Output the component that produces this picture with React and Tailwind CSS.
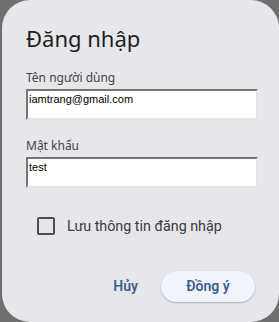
import { useState } from 'react'

const inputCls =
  "block w-[232px] h-[31px] bg-white border-2 border-t-[#767676] border-l-[#767676] border-b-[#e4e4e4] border-r-[#e4e4e4] px-[1px] pt-0 pb-[12px] leading-[15px] text-[11px] text-black outline-none font-['Liberation_Sans',Arial,sans-serif]"

export default function App() {
  const [user, setUser] = useState('iamtrang@gmail.com')
  const [pass, setPass] = useState('test')
  const [remember, setRemember] = useState(false)

  return (
    <div className="h-[322px] w-[279px] bg-[#6f6f6f] pl-[2px] overflow-hidden">
      <div className="h-full rounded-[28px] bg-[#e7e7eb] px-[24px] pt-[24px] flex flex-col">
        {/* Title */}
        <h1 className="text-[22px] leading-[28px] text-[#1e1e1e] font-['Noto_Sans',sans-serif]">
          Đăng nhập
        </h1>

        {/* Username */}
        <label className="mt-[18px] mb-[3px] text-[12px] leading-[16px] text-[#454545] font-['Noto_Sans',sans-serif]">
          Tên người dùng
        </label>
        <input className={inputCls} value={user} onChange={e => setUser(e.target.value)} />

        {/* Password */}
        <label className="mt-[18px] mb-[3px] text-[12px] leading-[16px] text-[#454545] font-['Noto_Sans',sans-serif]">
          Mật khẩu
        </label>
        <input className={inputCls} value={pass} onChange={e => setPass(e.target.value)} />

        {/* Remember */}
        <button
          type="button"
          onClick={() => setRemember(!remember)}
          className="mt-[29px] ml-[11px] flex items-center gap-[12px] text-left"
        >
          <span className="w-[18px] h-[18px] rounded-[2px] border-2 border-[#4a4e54] flex items-center justify-center">
            {remember && <span className="w-[10px] h-[10px] bg-[#4a4e54]" />}
          </span>
          <span className="text-[14.3px] leading-[18px] text-[#3a3a3a] font-['Roboto',sans-serif]">
            Lưu thông tin đăng nhập
          </span>
        </button>

        {/* Actions */}
        <div className="mt-[36px] flex items-center justify-end">
          <button
            type="button"
            className="mr-[23px] text-[14px] font-semibold text-[#3d5e8c] font-['Roboto',sans-serif]"
          >
            Hủy
          </button>
          <button
            type="button"
            className="w-[94px] h-[31px] rounded-full bg-[#f2f4fb] shadow-[0_1px_2px_rgba(0,0,0,0.25)] text-[14px] font-semibold text-[#3d5e8c] font-['Roboto',sans-serif]"
          >
            Đồng ý
          </button>
        </div>
      </div>
    </div>
  )
}
